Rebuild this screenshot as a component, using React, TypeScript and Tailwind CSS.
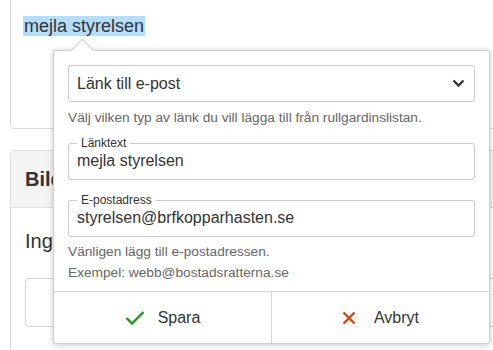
import React from "react";

export default function App() {
  return (
    <div
      className="relative w-[493px] h-[350px] overflow-hidden bg-white text-[#333]"
      style={{ fontFamily: '"Liberation Sans", Arial, sans-serif' }}
    >
      {/* background cards */}
      <div className="ml-[10px] mr-[-20px] mt-[-11px] h-[140px] rounded border border-[#dcdcdc] pl-[12px] pt-[25px]">
        <span className="bg-[#b4ddfb] px-[1px] text-[18px] leading-[23px]">mejla styrelsen</span>
      </div>
      <div className="ml-[10px] mr-[-20px] mt-[21px] h-[240px] rounded border border-[#dcdcdc]">
        <div className="flex h-[57px] items-center border-b border-[#e2e2e2] bg-[#f4f4f4] px-[14px] text-[20px] font-bold">
          Bild
        </div>
        <div className="px-[14px] pt-[20px] text-[20px] leading-[26px]">Ingen bild vald</div>
        <div className="mx-[14px] mt-[24px] flex h-[49px] items-center justify-end rounded border border-[#d4d4d4] px-[2px] text-[16px]">
          <span className="mr-[-38px]">Välj</span>
        </div>
      </div>

      {/* popup */}
      <div className="absolute left-[53px] top-[50px] w-[437px] h-[294px] rounded-[2px] border border-[#cfcfcf] bg-white shadow-[0_1px_6px_rgba(0,0,0,0.22)]">
        <div className="absolute left-[20px] top-[-9px] h-[17px] w-[17px] rotate-45 border-l border-t border-[#cfcfcf] bg-white" />
        <div className="relative px-[14px] pt-[14px]">
          <div className="flex h-[37px] items-center justify-between rounded-[3px] border border-[#cccccc] pl-[8px] pr-[9px] text-[16px]">
            <span>Länk till e-post</span>
            <svg width="13" height="9" viewBox="0 0 13 9" fill="none">
              <path d="M1.5 1.5L6.5 6.5L11.5 1.5" stroke="#333" strokeWidth="2.4" />
            </svg>
          </div>
          <div className="mt-[7px] text-[13.7px] leading-[17px] text-[#666]">
            Välj vilken typ av länk du vill lägga till från rullgardinslistan.
          </div>

          <fieldset className="mt-[10px] rounded-[3px] border border-[#cccccc] px-[8px] pb-[8px]">
            <legend className="px-[4px] text-[12px] leading-[14px]">Länktext</legend>
            <div className="text-[16px] leading-[20px] mt-[1px]">mejla styrelsen</div>
          </fieldset>

          <fieldset className="mt-[13px] rounded-[3px] border border-[#cccccc] px-[8px] pb-[8px]">
            <legend className="px-[4px] text-[12px] leading-[14px]">E-postadress</legend>
            <div className="text-[16px] leading-[20px] mt-[1px]">styrelsen@brfkopparhasten.se</div>
          </fieldset>

          <div className="mt-[4px] text-[13.7px] leading-[21px] text-[#666]">
            Vänligen lägg till e-postadressen.
            <br />
            Exempel: webb@bostadsratterna.se
          </div>
        </div>

        <div className="absolute bottom-0 left-0 right-0 flex h-[52px] border-t border-[#d6d6d6]">
          <div className="flex flex-1 items-center justify-center gap-[13px] text-[16px]">
            <svg width="20" height="14" viewBox="0 0 20 14" fill="none">
              <path d="M1.5 7L7 12.5L18.5 1" stroke="#1f9a22" strokeWidth="2.4" />
            </svg>
            <span>Spara</span>
          </div>
          <div className="flex flex-1 items-center justify-center gap-[18px] border-l border-[#d6d6d6] text-[16px]">
            <svg width="14" height="14" viewBox="0 0 14 14" fill="none">
              <path d="M1.5 1.5L12.5 12.5M12.5 1.5L1.5 12.5" stroke="#e0440e" strokeWidth="2.4" />
            </svg>
            <span>Avbryt</span>
          </div>
        </div>
      </div>
    </div>
  );
}
